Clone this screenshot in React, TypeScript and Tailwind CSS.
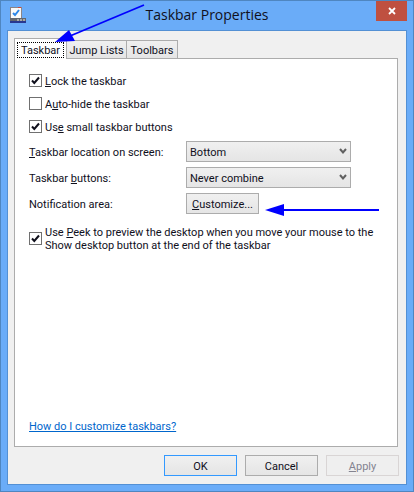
import type { ReactNode } from "react";

export default function App() {
  return (
    <div className="relative flex min-h-screen w-full flex-col border border-[#4f86c0] bg-[#6aacf8] px-1.5 pb-1.5 font-[Roboto,sans-serif] text-[11px] leading-[13px] text-[#10101c]">
      <TitleBar />
      <main className="flex flex-1 flex-col border border-[#5390d4] bg-[#f0f0f0] px-1.5 pt-[7px] pb-2">
        <div role="tablist" className="z-1 -mb-px flex items-end">
          <button
            role="tab"
            aria-selected="true"
            className="h-[21px] w-[53px] border border-b-0 border-[#acacac] bg-white p-0.5 pb-0"
          >
            <span className="flex h-4 items-center justify-center border border-dotted border-black">Taskbar</span>
          </button>
          <Tab className="w-[60px]">Jump Lists</Tab>
          <Tab className="w-[51px]">Toolbars</Tab>
        </div>

        <section className="mr-0.5 flex flex-1 flex-col border border-[#acacac] bg-white px-3.5 pt-2.5 pb-[13px]">
          <div className="flex flex-col">
            <Check defaultChecked>
              <u>L</u>ock the taskbar
            </Check>
            <Check>
              A<u>u</u>to-hide the taskbar
            </Check>
            <Check defaultChecked>
              Us<u>e</u> small taskbar buttons
            </Check>
          </div>

          <div className="mt-[3px] grid grid-cols-[157px_1fr] items-center gap-y-[5px]">
            <label htmlFor="location" className="pt-0.5">
              <u>T</u>askbar location on screen:
            </label>
            <Select id="location" options={["Bottom", "Left", "Right", "Top"]} />
            <label htmlFor="buttons" className="pt-0.5">
              Taskbar <u>b</u>uttons:
            </label>
            <Select id="buttons" options={["Never combine", "Always combine, hide labels", "Combine when taskbar is full"]} />
            <span id="notification" className="pt-0.5">
              Notification area:
            </span>
            <Button describedBy="notification">
              <u>C</u>ustomize...
            </Button>
          </div>

          <div className="mt-2.5">
            <Check defaultChecked tall>
              Use <u>P</u>eek to preview the desktop when you move your mouse to the
              <br />
              Show desktop button at the end of the taskbar
            </Check>
          </div>

          <a href="#help" className="mt-auto self-start text-[#0066cc] underline">
            How do I customize taskbars?
          </a>
        </section>

        <footer className="mt-2 mr-px flex justify-end gap-2">
          <Button className="border-[#3399ff]">OK</Button>
          <Button>Cancel</Button>
          <Button disabled>
            <u>A</u>pply
          </Button>
        </footer>
      </main>

      {/* callout arrows */}
      <svg className="pointer-events-none absolute top-[3px] left-[53px] z-10 h-10 w-[92px]" viewBox="54 4 92 40">
        <path d="M144 5 70 36" stroke="#0000ff" strokeWidth="1.8" />
        <path d="M55 42 69 30 75 41Z" fill="#0000ff" />
      </svg>
      <svg className="pointer-events-none absolute top-[202px] left-[263px] z-10 h-4 w-[116px]" viewBox="264 203 116 16">
        <path d="M379 210H284" stroke="#0000ff" strokeWidth="2" />
        <path d="M265 210 284 204V216Z" fill="#0000ff" />
      </svg>
    </div>
  );
}

function TitleBar() {
  return (
    <header className="grid h-[29px] grid-cols-[1fr_auto_1fr] items-start">
      <svg className="mt-1.5 ml-[3px] h-4 w-4" viewBox="0 0 16 16">
        <path d="M0 0H12V12H0Z" fill="#8a8588" />
        <path d="M1 1H11V11H1Z" fill="#fafafa" />
        <path d="M8 0H11V1H8Z" fill="#d04a38" />
        <path d="M3 6 5 8 9 3" fill="none" stroke="#2c86e8" strokeWidth="2" />
        <path d="M0 11H16V14H0Z" fill="#62666e" />
        <path d="M0 14H16V16H0Z" fill="#283890" />
        <path d="M7 12H9V14H7ZM10 12H12V14H10ZM13 12H15V14H13Z" fill="#a8a8a8" />
      </svg>
      <h1 className="font-['Open_Sans',sans-serif] text-[14px] leading-[28px] font-normal">Taskbar Properties</h1>
      <button aria-label="Close" className="flex h-5 w-[31px] items-center justify-center justify-self-end bg-[#bf5040]">
        <svg className="h-2 w-2" viewBox="0 0 8 8">
          <path d="M1 1 7 7M7 1 1 7" stroke="#fff" strokeWidth="1.8" />
        </svg>
      </button>
    </header>
  );
}

function Tab({ children, className }: { children: ReactNode; className: string }) {
  return (
    <button
      role="tab"
      aria-selected="false"
      className={`h-[19px] border border-l-0 border-[#acacac] bg-linear-to-b from-[#f0f0f0] to-[#e5e5e5] pt-0.5 ${className}`}
    >
      {children}
    </button>
  );
}

function Check({ children, defaultChecked, tall }: { children: ReactNode; defaultChecked?: boolean; tall?: boolean }) {
  return (
    <label className={`flex items-center gap-[3px] ${tall ? "" : "h-[23px]"}`}>
      <span className="grid shrink-0">
        <input
          type="checkbox"
          defaultChecked={defaultChecked}
          className="peer col-start-1 row-start-1 h-[13px] w-[13px] appearance-none border border-[#707070] bg-white"
        />
        <svg className="pointer-events-none invisible col-start-1 row-start-1 h-[13px] w-[13px] peer-checked:visible" viewBox="0 0 13 13">
          <path d="M3 6.5 5.3 9 10 3.5" fill="none" stroke="#10101c" strokeWidth="2" />
        </svg>
      </span>
      <span className="pt-0.5">{children}</span>
    </label>
  );
}

function Select({ id, options }: { id: string; options: string[] }) {
  return (
    <div className="grid w-[165px] grid-cols-1 items-center">
      <select
        id={id}
        className="col-start-1 row-start-1 h-[21px] w-full appearance-none border border-[#acacac] bg-linear-to-b from-[#f0f0f0] to-[#e5e5e5] pt-0.5 pl-[3px]"
      >
        {options.map((o) => (
          <option key={o}>{o}</option>
        ))}
      </select>
      <svg className="pointer-events-none col-start-1 row-start-1 mr-1 h-[7px] w-2 justify-self-end" viewBox="0 0 8 7">
        <path d="M1 1 4 4.5 7 1" fill="none" stroke="#606060" strokeWidth="2" />
      </svg>
    </div>
  );
}

function Button({
  children,
  className = "border-[#acacac]",
  disabled,
  describedBy,
}: {
  children: ReactNode;
  className?: string;
  disabled?: boolean;
  describedBy?: string;
}) {
  return (
    <button
      disabled={disabled}
      aria-describedby={describedBy}
      className={`h-[21px] w-[73px] border pt-0.5 ${
        disabled ? "border-[#d9d5d5] bg-[#efefef] text-[#838390]" : `bg-linear-to-b from-[#f0f0f0] to-[#e5e5e5] ${className}`
      }`}
    >
      {children}
    </button>
  );
}
